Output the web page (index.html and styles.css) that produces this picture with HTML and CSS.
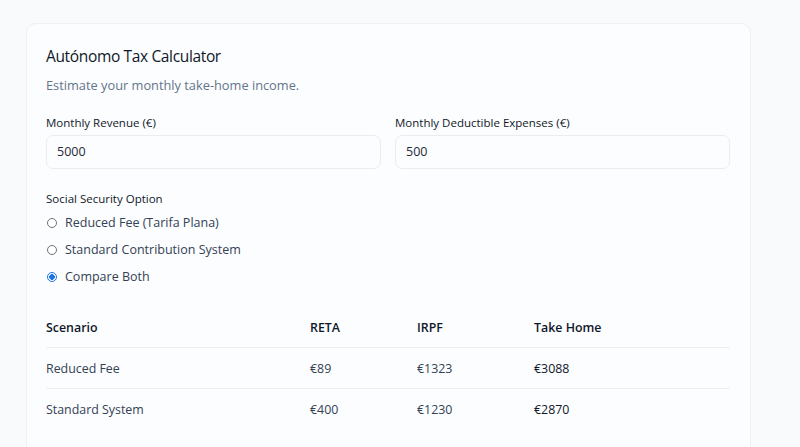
FILE: index.html
```html
<!DOCTYPE html>
<html lang="en">
<head>
<meta charset="utf-8">
<title>Autónomo Tax Calculator</title>
<link rel="stylesheet" href="styles.css">
</head>
<body>
<div class="card">
  <h1 class="title">Autónomo Tax Calculator</h1>
  <p class="subtitle">Estimate your monthly take-home income.</p>
  <div class="fields">
    <div class="field">
      <label class="label">Monthly Revenue (€)</label>
      <div class="input">5000</div>
    </div>
    <div class="field">
      <label class="label">Monthly Deductible Expenses (€)</label>
      <div class="input">500</div>
    </div>
  </div>
  <div class="group">
    <div class="group-label">Social Security Option</div>
    <div class="radio"><span class="dot"></span><span>Reduced Fee (Tarifa Plana)</span></div>
    <div class="radio"><span class="dot"></span><span>Standard Contribution System</span></div>
    <div class="radio"><span class="dot checked"></span><span>Compare Both</span></div>
  </div>
  <table class="results">
    <thead>
      <tr><th class="c1">Scenario</th><th class="c2">RETA</th><th class="c3">IRPF</th><th class="c4">Take Home</th></tr>
    </thead>
    <tbody>
      <tr><td>Reduced Fee</td><td>€89</td><td>€1323</td><td class="take">€3088</td></tr>
      <tr><td>Standard System</td><td>€400</td><td>€1230</td><td class="take">€2870</td></tr>
    </tbody>
  </table>
</div>
</body>
</html>
```
FILE: styles.css
```css
html, body { margin: 0; padding: 0; }
body {
  background: #f8fafc;
  font-family: "Open Sans", "Noto Sans", sans-serif;
  color: #111827;
  height: 447px;
  overflow: hidden;
}
.card {
  box-sizing: border-box;
  margin: 23px 0 0 26px;
  width: 725px;
  height: 440px;
  background: #fcfdfe;
  border: 1px solid #eef1f5;
  border-radius: 10px;
  padding: 20px 20px 20px 19px;
}
.title {
  margin: 0;
  font-size: 15.5px;
  font-weight: 500;
  letter-spacing: -0.35px;
  line-height: 24px;
  color: #0f172a;
}
.subtitle {
  margin: 7px 0 0;
  font-size: 12.8px;
  line-height: 20px;
  color: #64748b;
}
.fields {
  display: grid;
  grid-template-columns: 1fr 1fr;
  gap: 14px;
  margin-top: 19px;
}
.field { display: flex; flex-direction: column; }
.label {
  font-size: 11.5px;
  font-weight: 500;
  line-height: 18px;
  color: #111827;
  margin-bottom: 3px;
}
.input {
  box-sizing: border-box;
  height: 34px;
  border: 1px solid #e9edf2;
  border-radius: 7px;
  background: #fcfdfe;
  padding: 0 10px;
  font-size: 12.5px;
  line-height: 32px;
  color: #1f2937;
}
.group { margin-top: 21px; }
.group-label {
  font-size: 11.5px;
  font-weight: 500;
  line-height: 18px;
  color: #111827;
  margin-bottom: 1px;
}
.radio {
  display: flex;
  align-items: center;
  gap: 8px;
  height: 27px;
  font-size: 12.5px;
  color: #334155;
}
.dot {
  box-sizing: border-box;
  width: 10px;
  height: 10px;
  margin-left: 1px;
  border-radius: 50%;
  border: 1px solid #6b7280;
  background: #fff;
}
.dot.checked {
  border: 1px solid #1a73e8;
  background: radial-gradient(circle, #1a73e8 0 2.6px, #fff 3px);
}
.results {
  margin-top: 17px;
  width: 684px;
  border-collapse: collapse;
  font-size: 12.4px;
}
.results th {
  text-align: left;
  font-weight: 600;
  color: #0f172a;
  height: 40px;
  padding: 0;
  border-bottom: 1px solid #eceff3;
}
.results td {
  height: 40px;
  padding: 0;
  color: #334155;
  border-bottom: 1px solid #eceff3;
}
.results tbody tr:last-child td { border-bottom: none; }
.results td.take { font-weight: 500; color: #0f172a; }
.c1 { width: 264px; }
.c2 { width: 107px; }
.c3 { width: 117px; }
.c4 { width: 196px; }
```
